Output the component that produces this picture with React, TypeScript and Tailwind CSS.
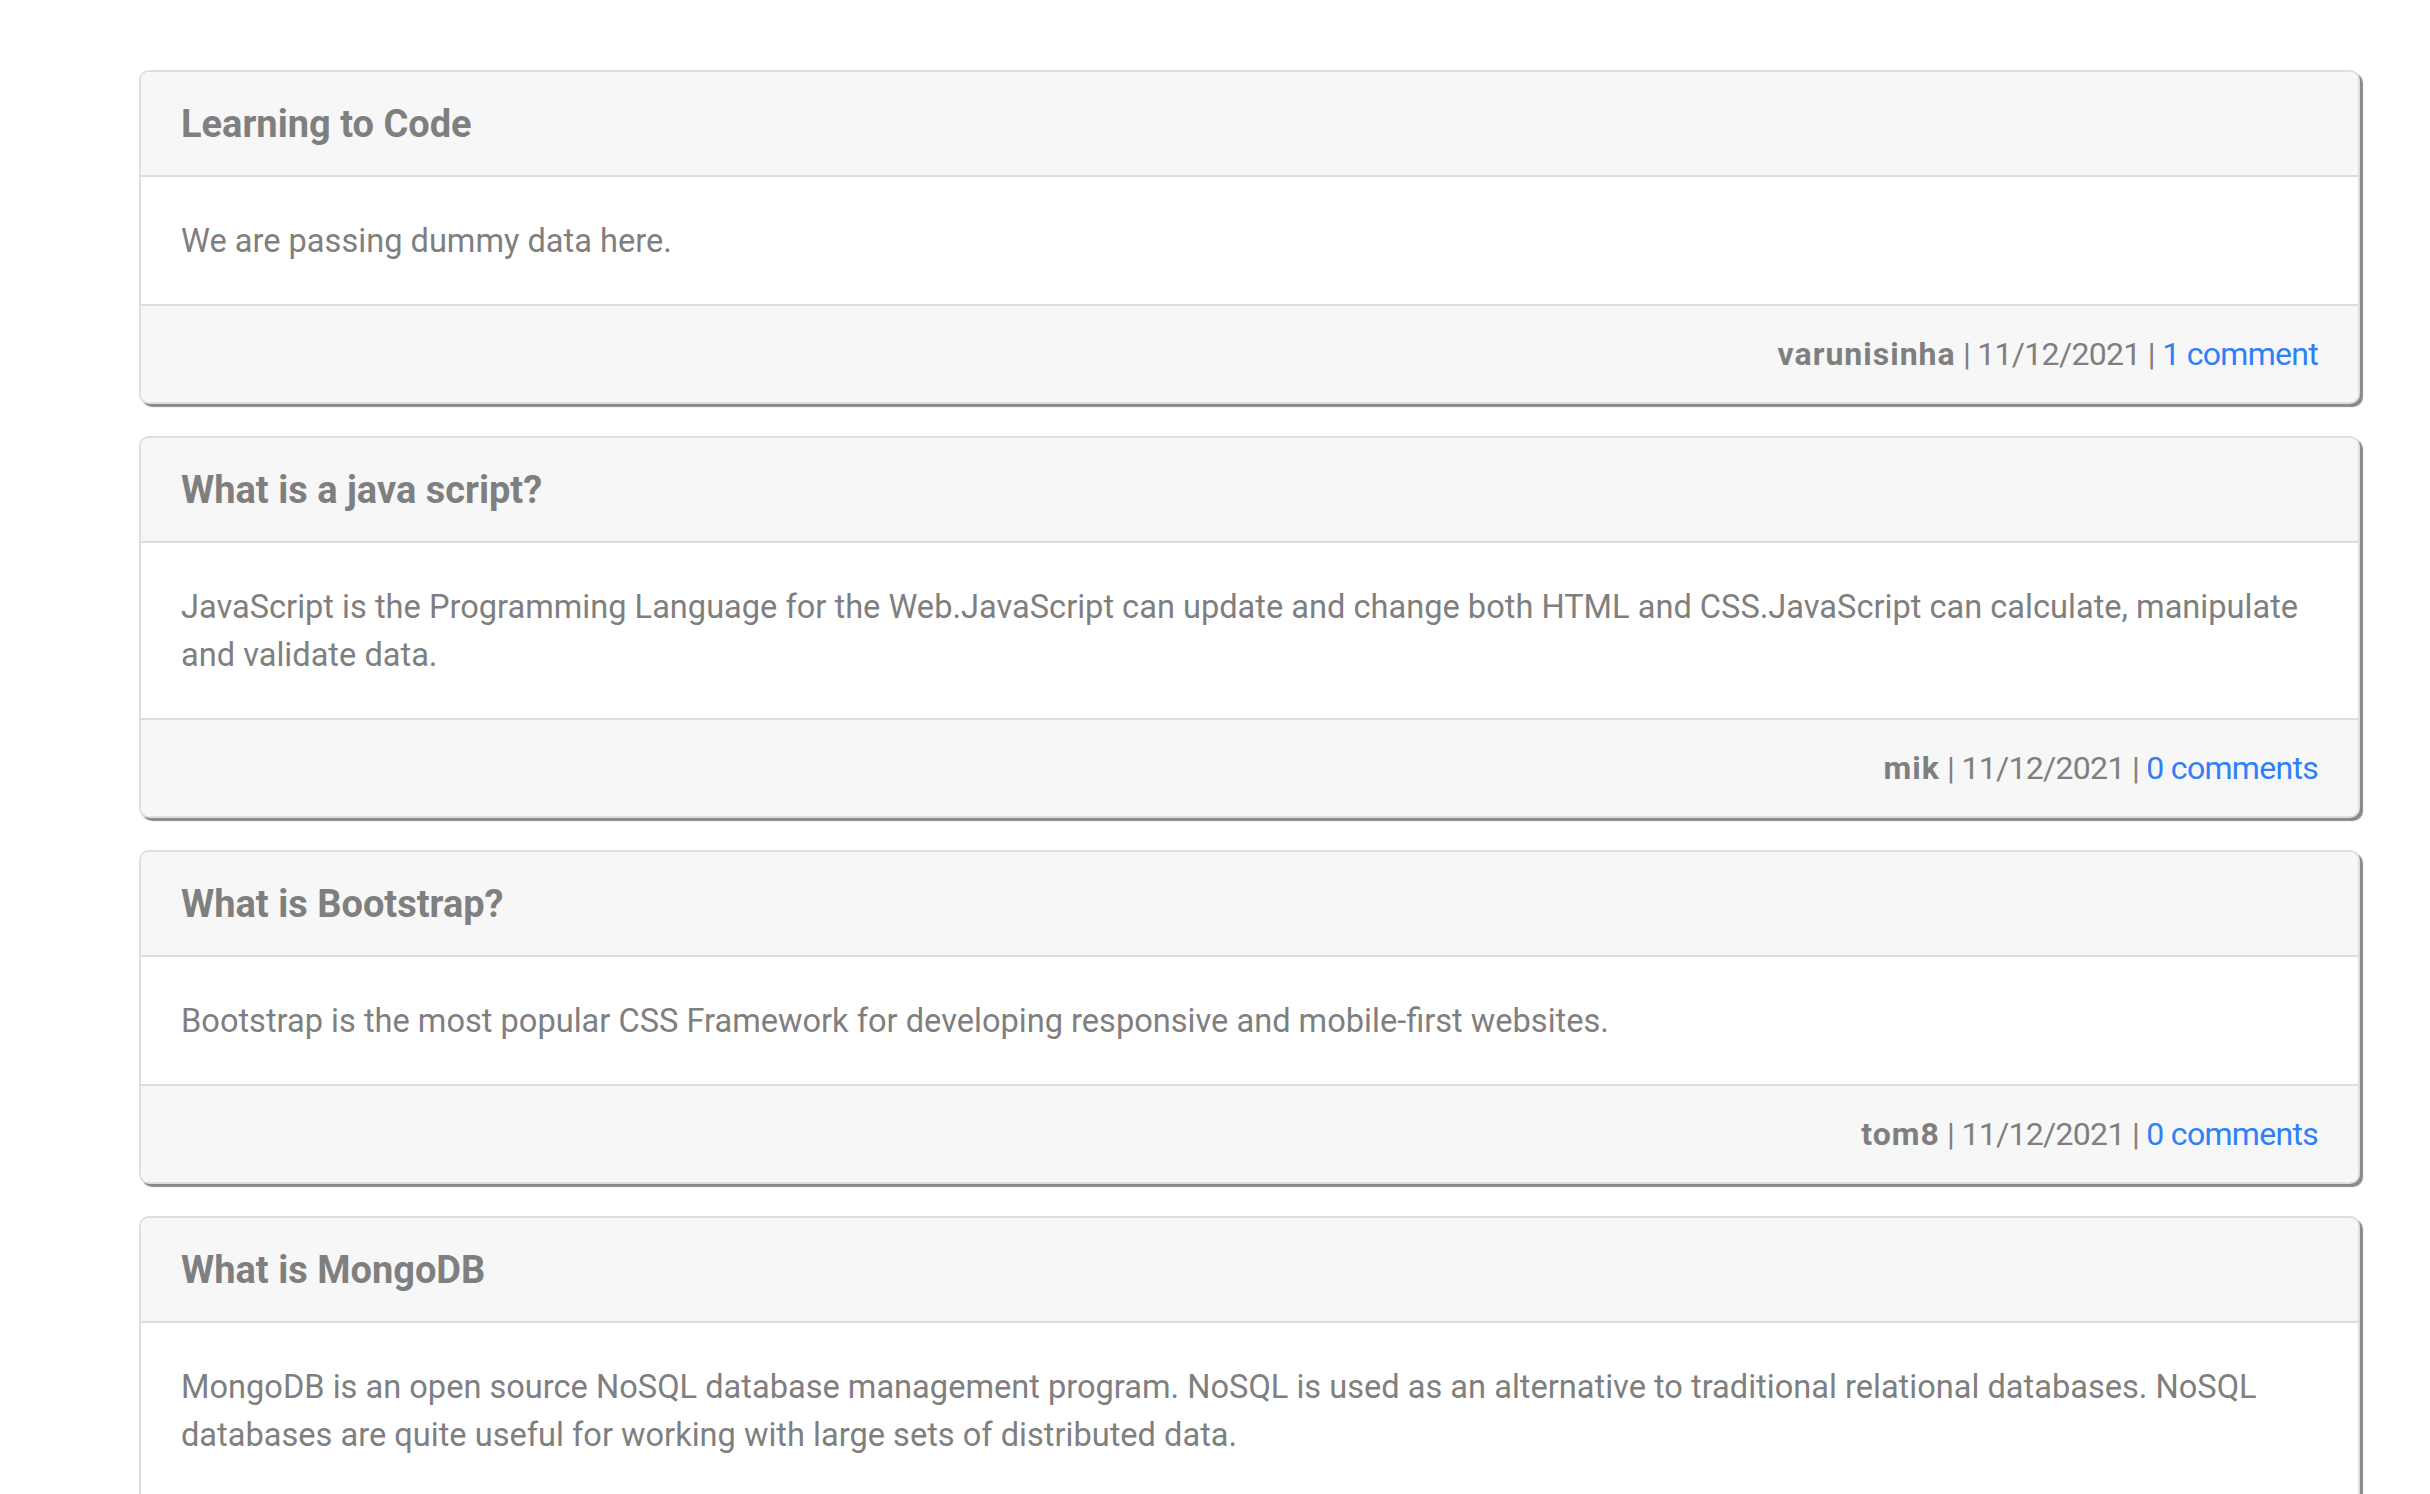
import React from "react";

type Post = { title: string; body: string; user: string; date: string; comments: string };

const posts: Post[] = [
  { title: "Learning to Code", body: "We are passing dummy data here.", user: "varunisinha", date: "11/12/2021", comments: "1 comment" },
  {
    title: "What is a java script?",
    body: "JavaScript is the Programming Language for the Web.JavaScript can update and change both HTML and CSS.JavaScript can calculate, manipulate and validate data.",
    user: "mik",
    date: "11/12/2021",
    comments: "0 comments",
  },
  {
    title: "What is Bootstrap?",
    body: "Bootstrap is the most popular CSS Framework for developing responsive and mobile-first websites.",
    user: "tom8",
    date: "11/12/2021",
    comments: "0 comments",
  },
  {
    title: "What is MongoDB",
    body: "MongoDB is an open source NoSQL database management program. NoSQL is used as an alternative to traditional relational databases. NoSQL databases are quite useful for working with large sets of distributed data.",
    user: "admin",
    date: "11/12/2021",
    comments: "0 comments",
  },
];

function Card({ p }: { p: Post }) {
  return (
    <div className="mb-[32px] overflow-hidden rounded-[10px] border-2 border-[#dedede] bg-white shadow-[3px_3px_1px_#8a8a8a]">
      <div className="border-b-2 border-[#dcdcdc] bg-[#f7f7f7] px-[40px] pb-[25px] pt-[26px]">
        <h5 className="text-[38px] font-bold leading-[52px] text-[#7f7f7f]">{p.title}</h5>
      </div>
      <div className="px-[40px] pb-[39px] pt-[40px]">
        <p className="text-[32.6px] leading-[48px] text-[#7f7f7f]">{p.body}</p>
      </div>
      <div className="border-t-2 border-[#dcdcdc] bg-[#f7f7f7] px-[40px] py-[24px] text-right text-[32px] leading-[48px] text-[#7f7f7f]">
        <span className="font-bold tracking-[1px]">{p.user}</span>
        <span className="tracking-[-0.7px]">
          {" "}| {p.date} |{" "}
          <a href="#" className="text-[#2f7ff7]">
            {p.comments}
          </a>
        </span>
      </div>
    </div>
  );
}

export default function App() {
  return (
    <div
      className="min-h-screen bg-white pl-[139px] pr-[70px] pt-[70px]"
      style={{ fontFamily: "Roboto, 'Liberation Sans', sans-serif" }}
    >
      {posts.map((p) => (
        <Card key={p.title} p={p} />
      ))}
    </div>
  );
}
